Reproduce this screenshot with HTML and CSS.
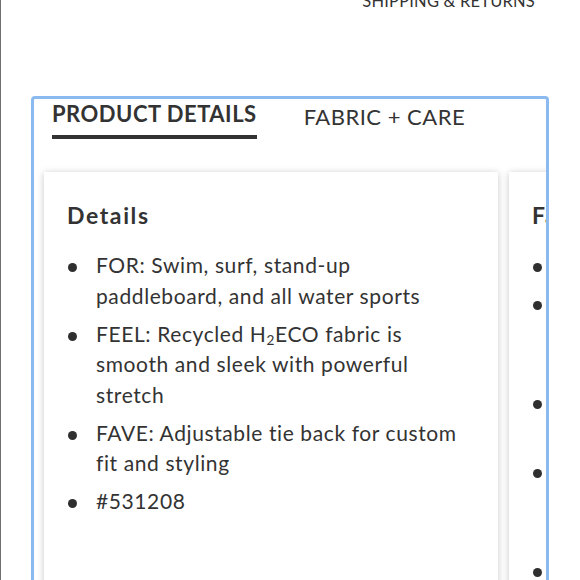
FILE: index.html
```html
<!DOCTYPE html>
<html lang="en">
<head>
<meta charset="utf-8">
<title>Product details</title>
<link rel="stylesheet" href="styles.css">
</head>
<body>
<div class="page">
  <div class="top-tab"><span>SHIPPING &amp; RETURNS</span></div>
  <div class="panel">
    <div class="tabs">
      <div class="tab active">PRODUCT DETAILS</div>
      <div class="tab">FABRIC + CARE</div>
    </div>
    <div class="cards">
      <div class="card">
        <h2 class="card-title">Details</h2>
        <ul class="list">
          <li><span>FOR: Swim, surf, stand-up paddleboard, and all water sports</span></li>
          <li><span>FEEL: Recycled H<sub>2</sub>ECO fabric is smooth and sleek with powerful stretch</span></li>
          <li><span>FAVE: Adjustable tie back for custom fit and styling</span></li>
          <li><span>#531208</span></li>
        </ul>
      </div>
      <div class="card">
        <h2 class="card-title">Fabric + Care</h2>
        <ul class="list">
          <li><span>Hand wash cold, lay flat to dry</span></li>
          <li><span>Body: 78% recycled nylon, 22% spandex in our signature H<sub>2</sub>ECO recycled fabric blend</span></li>
          <li><span>Lining: 100% recycled polyester with a soft, smooth hand</span></li>
          <li><span>Made with recycled fishing nets and other post-consumer nylon waste from our oceans</span></li>
          <li><span>Imported</span></li>
        </ul>
      </div>
    </div>
  </div>
</div>
</body>
</html>
```
FILE: styles.css
```css
html, body {
  margin: 0;
  padding: 0;
  background: #ffffff;
}

body {
  font-family: "Lato", "Noto Sans", sans-serif;
  color: #333333;
}

.page {
  height: 580px;
  overflow: hidden;
  border-left: 1px solid #6f6f6f;
  box-sizing: border-box;
}

.top-tab {
  display: flex;
  justify-content: flex-end;
  padding-right: 45px;
  margin-top: -7px;
  font-size: 16.5px;
  line-height: 17px;
  font-weight: 400;
  letter-spacing: 0.2px;
  color: #333333;
}

.panel {
  margin: 86px 0 0 30px;
  width: 518px;
  height: 600px;
  box-sizing: border-box;
  border: 3px solid #8bbaf0;
  border-radius: 4px;
  overflow: hidden;
}

.tabs {
  display: flex;
  align-items: flex-start;
  gap: 47px;
  padding-left: 18px;
}

.tab {
  font-size: 22px;
  line-height: 26px;
  letter-spacing: 0.5px;
  padding-top: 5px;
  color: #333333;
}

.tab.active {
  font-weight: 700;
  padding-top: 2px;
  padding-bottom: 8px;
  border-bottom: 4px solid #333333;
}

.cards {
  display: flex;
  gap: 11px;
  padding-left: 10px;
  margin-top: 33px;
}

.card {
  flex: none;
  width: 454px;
  min-height: 480px;
  box-sizing: border-box;
  padding: 30px 23px 0 23px;
  background: #ffffff;
  box-shadow: 0 1px 7px rgba(0, 0, 0, 0.22);
}

.card-title {
  margin: 0;
  font-size: 23px;
  line-height: 26px;
  letter-spacing: 1.6px;
  font-weight: 700;
  color: #333333;
}

.list {
  list-style: none;
  margin: 22px 0 0 0;
  padding: 0 0 0 1px;
  font-size: 21px;
  line-height: 30.5px;
  letter-spacing: 0.6px;
}

.list li {
  display: flex;
  margin-bottom: 7.5px;
}

.list li::before {
  content: "";
  flex: none;
  width: 9px;
  height: 9px;
  border-radius: 50%;
  background: #2f2f2f;
  margin-top: 13px;
  margin-right: 19px;
}

.list sub {
  font-size: 0.65em;
  line-height: 0;
  vertical-align: -0.2em;
}
```
